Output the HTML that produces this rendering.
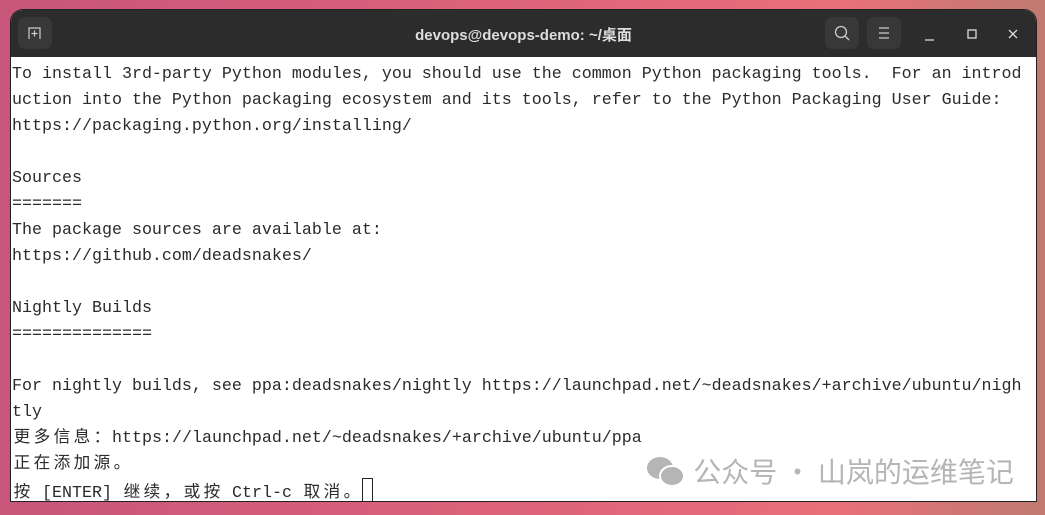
<!DOCTYPE html>
<html><head><meta charset="utf-8"><style>
body{margin:0;width:1045px;height:515px;overflow:hidden;background:linear-gradient(90deg,#c8557a 0%,#d9607a 40%,#e8707a 80%,#c07a70 100%);font-family:"Liberation Sans","Noto Sans CJK SC",sans-serif;}
.win{position:absolute;left:11px;top:10px;width:1025px;height:491px;border-radius:12px 12px 0 0;overflow:hidden;background:#fff;box-shadow:0 0 0 1px #222;}
.tb{position:absolute;left:0;top:0;width:100%;height:47px;background:#2c2c2c;}
.btn{position:absolute;top:7px;width:34px;height:32px;border-radius:7px;background:#383838;}
.title{position:absolute;left:0;right:0;top:14px;text-align:center;color:#ddd;font-size:15px;font-weight:bold;}
.term{position:absolute;left:1px;top:52px;font-family:"Liberation Mono","Noto Sans CJK SC",monospace;font-size:16.67px;line-height:26px;color:#2b2b2b;white-space:pre;}
.c{display:inline-block;width:20px;text-align:center;}
.cur{display:inline-block;width:9px;height:24px;border:1px solid #222;vertical-align:-7px;}
.wm{position:absolute;color:#b5b5b5;font-size:28px;font-family:"Noto Sans CJK SC",sans-serif;white-space:nowrap;}
</style></head><body>
<div class="win">
<div class="tb">
<div class="btn" style="left:7px"><svg width="34" height="32"><path d="M11 22V11h11v11M16.5 13.5v6M13.5 16.5h6" stroke="#ccc" fill="none" stroke-width="1.2"/></svg></div>
<div class="title">devops@devops-demo: ~/桌面</div>
<div class="btn" style="left:814px"><svg width="34" height="32"><circle cx="16" cy="15" r="5.5" stroke="#ccc" fill="none" stroke-width="1.3"/><path d="M20 19l4 4" stroke="#ccc" stroke-width="1.3"/></svg></div>
<div class="btn" style="left:856px"><svg width="34" height="32"><path d="M12 11h10M12 16h10M12 21h10" stroke="#ccc" stroke-width="1.2"/></svg></div>
<svg style="position:absolute;left:905px;top:10px" width="110" height="28"><path d="M9 20h9" stroke="#ddd" stroke-width="1.3"/><rect x="52" y="10" width="8" height="8" stroke="#ddd" fill="none" stroke-width="1.3"/><path d="M93 10l8 8M101 10l-8 8" stroke="#ddd" stroke-width="1.3"/></svg>
</div>
<div class="term">To install 3rd-party Python modules, you should use the common Python packaging tools.  For an introd
uction into the Python packaging ecosystem and its tools, refer to the Python Packaging User Guide:
https://packaging.python.org/installing/

Sources
=======
The package sources are available at:
https://github.com/deadsnakes/

Nightly Builds
==============

For nightly builds, see ppa:deadsnakes/nightly https://launchpad.net/~deadsnakes/+archive/ubuntu/nigh
tly
<span class="c">更</span><span class="c">多</span><span class="c">信</span><span class="c">息</span><span class="c">：</span>https://launchpad.net/~deadsnakes/+archive/ubuntu/ppa
<span class="c">正</span><span class="c">在</span><span class="c">添</span><span class="c">加</span><span class="c">源</span><span class="c">。</span>
<span class="c">按</span> [ENTER] <span class="c">继</span><span class="c">续</span><span class="c">，</span><span class="c">或</span><span class="c">按</span> Ctrl-c <span class="c">取</span><span class="c">消</span><span class="c">。</span><span class="cur"></span></div>
<div class="wm" style="left:634px;top:441px"><svg width="42" height="34" style="vertical-align:-6px"><ellipse cx="15" cy="14" rx="13" ry="11" fill="#b5b5b5"/><ellipse cx="27" cy="22" rx="12" ry="10" fill="#b5b5b5" stroke="#fff" stroke-width="2"/></svg> 公众号 · 山岚的运维笔记</div>
</div>
</body></html>
